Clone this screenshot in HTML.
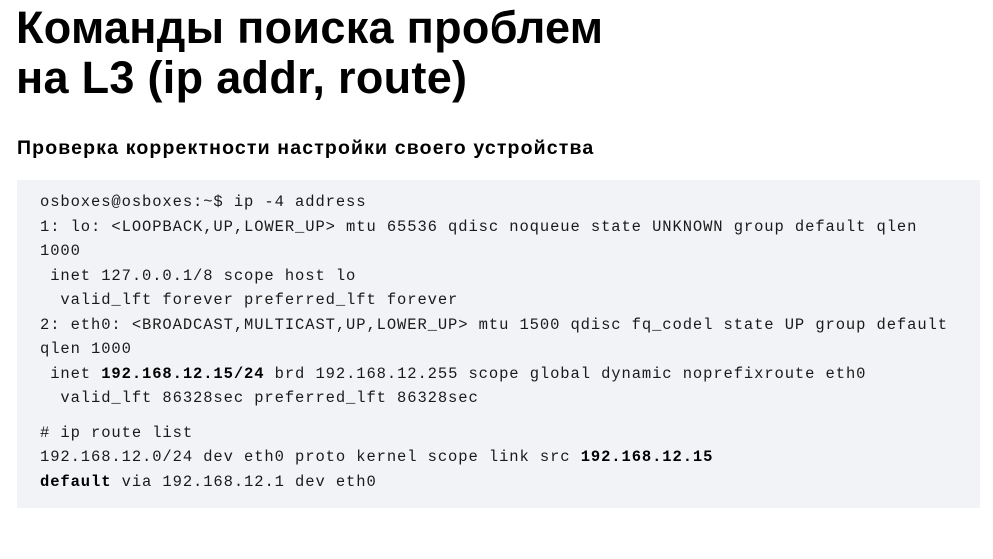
<!DOCTYPE html>
<html><head><meta charset="utf-8"><style>
body{margin:0;width:993px;height:559px;background:#fff;position:relative;overflow:hidden;font-family:"Liberation Sans",sans-serif;color:#000}
h1{position:absolute;left:16px;top:3px;margin:0;font-size:45px;line-height:50px;font-weight:bold;letter-spacing:0.3px}
h2{position:absolute;left:17px;top:137px;margin:0;font-size:19.5px;line-height:22px;font-weight:bold;letter-spacing:1.15px}
.box{position:absolute;left:17px;top:180px;width:963px;height:328px;background:#f2f3f7}
.l{position:absolute;left:40px;font-family:"Liberation Mono",monospace;font-size:15.5px;letter-spacing:0.9px;line-height:20px;white-space:pre;color:#1a1a1a}
b{font-weight:bold;color:#000}
</style></head><body>
<h1>Команды поиска проблем<br>на L3 (ip addr, route)</h1>
<h2>Проверка корректности настройки своего устройства</h2>
<div class="box"></div>
<div class="l" style="top:192px">osboxes@osboxes:~$ ip -4 address</div>
<div class="l" style="top:217px">1: lo: &lt;LOOPBACK,UP,LOWER_UP&gt; mtu 65536 qdisc noqueue state UNKNOWN group default qlen</div>
<div class="l" style="top:241px">1000</div>
<div class="l" style="top:266px"> inet 127.0.0.1/8 scope host lo</div>
<div class="l" style="top:290px">  valid_lft forever preferred_lft forever</div>
<div class="l" style="top:315px">2: eth0: &lt;BROADCAST,MULTICAST,UP,LOWER_UP&gt; mtu 1500 qdisc fq_codel state UP group default</div>
<div class="l" style="top:339px">qlen 1000</div>
<div class="l" style="top:364px"> inet <b>192.168.12.15/24</b> brd 192.168.12.255 scope global dynamic noprefixroute eth0</div>
<div class="l" style="top:388px">  valid_lft 86328sec preferred_lft 86328sec</div>
<div class="l" style="top:423px"># ip route list</div>
<div class="l" style="top:447px">192.168.12.0/24 dev eth0 proto kernel scope link src <b>192.168.12.15</b></div>
<div class="l" style="top:472px"><b>default</b> via 192.168.12.1 dev eth0</div>
</body></html>
